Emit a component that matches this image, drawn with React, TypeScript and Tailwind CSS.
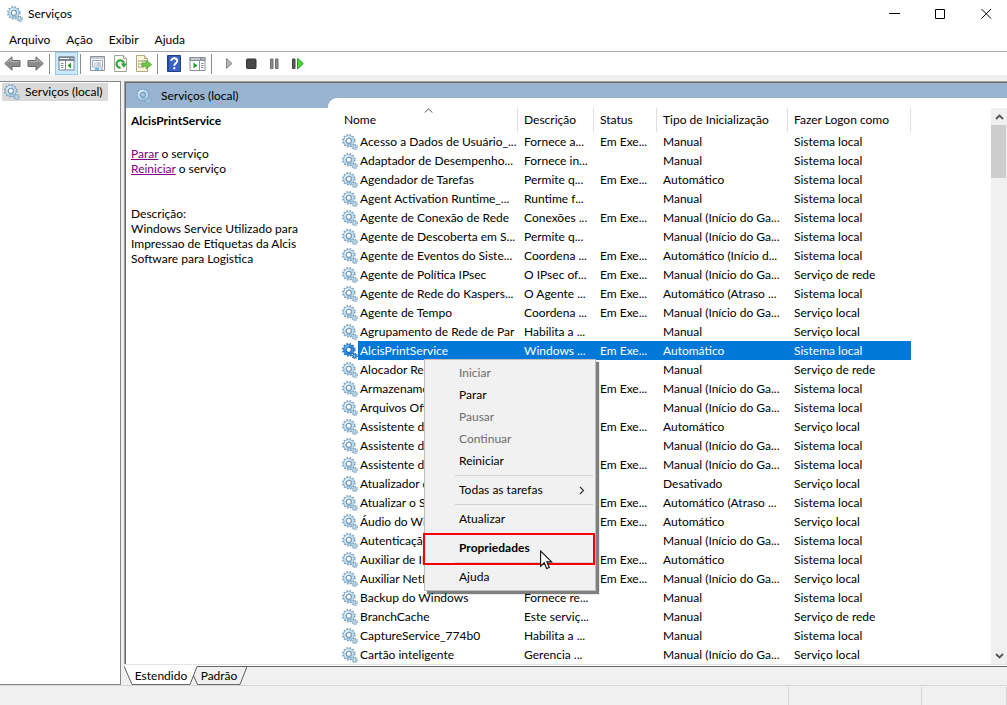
import type { ReactNode } from 'react';

type Service = { name: string; desc: string; running?: boolean; start: string; logon: string };

const MANUAL = 'Manual';
const AUTO = 'Automático';
const MANUAL_TRIGGER = 'Manual (Início do Ga...';
const LOCAL_SYSTEM = 'Sistema local';
const LOCAL_SERVICE = 'Serviço local';
const NETWORK = 'Serviço de rede';

const services: Service[] = [
  { name: 'Acesso a Dados de Usuário_...', desc: 'Fornece a...', running: true, start: MANUAL, logon: LOCAL_SYSTEM },
  { name: 'Adaptador de Desempenho...', desc: 'Fornece in...', start: MANUAL, logon: LOCAL_SYSTEM },
  { name: 'Agendador de Tarefas', desc: 'Permite q...', running: true, start: AUTO, logon: LOCAL_SYSTEM },
  { name: 'Agent Activation Runtime_...', desc: 'Runtime f...', start: MANUAL, logon: LOCAL_SYSTEM },
  { name: 'Agente de Conexão de Rede', desc: 'Conexões ...', running: true, start: MANUAL_TRIGGER, logon: LOCAL_SYSTEM },
  { name: 'Agente de Descoberta em S...', desc: 'Permite q...', start: MANUAL_TRIGGER, logon: LOCAL_SYSTEM },
  { name: 'Agente de Eventos do Siste...', desc: 'Coordena ...', running: true, start: 'Automático (Início d...', logon: LOCAL_SYSTEM },
  { name: 'Agente de Política IPsec', desc: 'O IPsec of...', running: true, start: MANUAL_TRIGGER, logon: NETWORK },
  { name: 'Agente de Rede do Kaspers...', desc: 'O Agente ...', running: true, start: 'Automático (Atraso ...', logon: LOCAL_SYSTEM },
  { name: 'Agente de Tempo', desc: 'Coordena ...', running: true, start: MANUAL_TRIGGER, logon: LOCAL_SERVICE },
  { name: 'Agrupamento de Rede de Par', desc: 'Habilita a ...', start: MANUAL, logon: LOCAL_SERVICE },
  { name: 'AlcisPrintService', desc: 'Windows ...', running: true, start: AUTO, logon: LOCAL_SYSTEM },
  { name: 'Alocador Remoto', desc: '', start: MANUAL, logon: NETWORK },
  { name: 'Armazenamento', desc: '', running: true, start: MANUAL_TRIGGER, logon: LOCAL_SYSTEM },
  { name: 'Arquivos Offline', desc: '', start: MANUAL_TRIGGER, logon: LOCAL_SYSTEM },
  { name: 'Assistente de', desc: '', running: true, start: AUTO, logon: LOCAL_SERVICE },
  { name: 'Assistente de', desc: '', start: MANUAL_TRIGGER, logon: LOCAL_SYSTEM },
  { name: 'Assistente de', desc: '', running: true, start: MANUAL_TRIGGER, logon: LOCAL_SYSTEM },
  { name: 'Atualizador de', desc: '', start: 'Desativado', logon: LOCAL_SERVICE },
  { name: 'Atualizar o Serviço', desc: '', running: true, start: 'Automático (Atraso ...', logon: LOCAL_SYSTEM },
  { name: 'Áudio do Windows', desc: '', running: true, start: AUTO, logon: LOCAL_SERVICE },
  { name: 'Autenticação', desc: '', start: MANUAL_TRIGGER, logon: LOCAL_SYSTEM },
  { name: 'Auxiliar de IP', desc: '', running: true, start: AUTO, logon: LOCAL_SYSTEM },
  { name: 'Auxiliar NetBIOS', desc: '', running: true, start: MANUAL_TRIGGER, logon: LOCAL_SERVICE },
  { name: 'Backup do Windows', desc: 'Fornece re...', start: MANUAL, logon: LOCAL_SYSTEM },
  { name: 'BranchCache', desc: 'Este serviç...', start: MANUAL, logon: NETWORK },
  { name: 'CaptureService_774b0', desc: 'Habilita a ...', start: MANUAL, logon: LOCAL_SYSTEM },
  { name: 'Cartão inteligente', desc: 'Gerencia ...', start: MANUAL_TRIGGER, logon: LOCAL_SERVICE },
];

function Gears({ selected = false, pale = false }: { selected?: boolean; pale?: boolean }) {
  const edge = selected ? '#1a6fc0' : pale ? '#7fa6c6' : '#7d9fb8';
  const body = selected ? '#2f8ce0' : '#bcdcf1';
  const hole = selected ? '#ffffff' : pale ? '#a9c3dc' : '#ffffff';
  return (
    <svg width="16" height="16" viewBox="0 0 16 16" className="shrink-0" aria-hidden="true">
      <circle cx="6.8" cy="6.8" r="6" fill="none" stroke={edge} strokeWidth="1.6" strokeDasharray="1.6 1.541" />
      <circle cx="6.8" cy="6.8" r="4" fill={hole} stroke={edge} strokeWidth="3.2" />
      <circle cx="6.8" cy="6.8" r="4.1" fill="none" stroke={body} strokeWidth="2.2" />
      <path d="M3.1 5.6A3.900 3.900 0 0 1 7 2.900" fill="none" stroke={selected ? '#8cc6f5' : '#e4f3fc'} strokeWidth="1.200" />
      <path d="M9.600 9.700A4.100 4.100 0 0 1 5 10.500" fill="none" stroke={selected ? '#1a6fc0' : '#86b4d6'} strokeWidth="1.200" />
      <circle cx="6.800" cy="6.800" r="2.500" fill="none" stroke={selected ? '#1a6fc0' : '#6a8ca6'} strokeWidth=".800" />
      <circle cx="12.700" cy="13" r="2.600" fill="none" stroke={edge} strokeWidth="1.200" strokeDasharray="1.040 1.002" />
      <circle cx="12.700" cy="13" r="1.500" fill={hole} stroke={edge} strokeWidth="1.600" />
      <circle cx="12.700" cy="13" r="1.600" fill="none" stroke={body} strokeWidth=".900" />
    </svg>
  );
}

function ToolButton({ label, active = false, children }: { label: string; active?: boolean; children: ReactNode }) {
  return (
    <button
      type="button"
      aria-label={label}
      className={
        active
          ? 'flex h-full w-[23px] items-center justify-center border border-[#90c8f6] bg-[#cce8ff]'
          : 'flex h-full w-[23px] items-center justify-center'
      }
    >
      <svg width="17" height="17" viewBox="0 0 17 17" className="shrink-0" aria-hidden="true">
        {children}
      </svg>
    </button>
  );
}

function ToolDivider() {
  return (
    <div className="flex h-5 w-2 pl-[2px]">
      <div className="w-px bg-[#8c8c8c]" />
    </div>
  );
}

function Toolbar() {
  return (
    <div className="flex h-[23px] items-center bg-white pl-px">
      <ToolButton label="Voltar">
        <path d="M.8 8.5 8 1.8v3.7h8v6H8v3.7Z" fill="#8b8b8b" stroke="#6a6a6a" />
        <path d="M2.6 8.3 7 4.2v2.4h7.9" fill="none" stroke="#b9b9b9" />
      </ToolButton>
      <ToolButton label="Avançar">
        <path d="M16.2 8.5 9 1.8v3.7H1v6h8v3.7Z" fill="#8b8b8b" stroke="#6a6a6a" />
        <path d="M14.4 8.3 10 4.2v2.4H2.1" fill="none" stroke="#b9b9b9" />
      </ToolButton>
      <ToolDivider />
      <ToolButton label="Mostrar/ocultar árvore do console" active>
        <path d="M1 2h15v13H1z" fill="#fff" stroke="#7a8793" />
        <path d="M.5 1.500h16v4.500H.5z" fill="#7a8793" />
        <path d="M2 3.500h9M12.500 3.500h1M14.500 3.500h1" stroke="#fff" />
        <path d="M7.500 6v9" stroke="#7a8793" />
        <path d="M3 8.500h2.500M3 10.500h2.500M3 12.500h2.500" stroke="#7d8b9a" />
        <path d="M13 7.500v6L9.500 10.500Z" fill="#1f9d2b" />
      </ToolButton>
      <ToolDivider />
      <ToolButton label="Propriedades">
        <path d="M1.500 1.500h14v14h-14z" fill="#f4f6f7" stroke="#8a929a" />
        <path d="M2 3h13" stroke="#c3ccd3" strokeWidth="2" />
        <path d="M3.500 5.500h10v6.500h-10z" fill="#fff" stroke="#9aa8b8" />
        <path d="M5 8h1.500M7.500 8H12M5 10h1.500M7.500 10H12" stroke="#8a9bb2" />
        <path d="M6 14h4" stroke="#28b6e8" strokeWidth="1.600" />
        <path d="M11.500 14H14" stroke="#9fb0bd" strokeWidth="1.400" />
      </ToolButton>
      <ToolButton label="Atualizar">
        <path d="M2.500.5h9l3 3v13h-12z" fill="#fbfbf6" stroke="#a3a398" />
        <path d="M11.500.5v3h3" fill="#e6e6dc" stroke="#a3a398" />
        <path d="M8.600 12.700a3.700 3.700 0 1 1 3.300-4" fill="none" stroke="#2aa636" strokeWidth="2.100" />
        <path d="M8.800 8.600h6l-2.800 4.200Z" fill="#2aa636" />
      </ToolButton>
      <ToolButton label="Exportar lista">
        <path d="M1.500.5h8l3 3v13h-11z" fill="#fdf8dc" stroke="#b3aa83" />
        <path d="M9.500.5v3h3" fill="#efe8c2" stroke="#b3aa83" />
        <path d="M3.200 6h1.200M3.200 9h1.200M3.200 12h1.200" stroke="#444" strokeWidth="1.200" />
        <path d="M5.500 6H11M5.500 9H9M5.500 12H9" stroke="#85815f" />
        <path d="M7 8h4.200V5.200L16.600 9.600l-5.400 4.300V11.200H7Z" fill="#6ccb42" stroke="#4aa72c" strokeWidth=".8" />
      </ToolButton>
      <ToolDivider />
      <ToolButton label="Ajuda">
        <path d="M1.500.5h13v16h-13z" fill="#3a62c4" stroke="#23408f" />
        <path d="M2.500 1v15" stroke="#2a4aa2" />
        <path d="M5.300 5.900c0-3.600 5.900-3.400 5.900 0 0 2.300-2.900 2.300-2.900 4.800" fill="none" stroke="#fff" strokeWidth="1.900" />
        <path d="M7.300 12.200h2v2h-2z" fill="#fff" />
      </ToolButton>
      <ToolButton label="Mostrar/ocultar painel de ações">
        <path d="M1 2.500h15v13H1z" fill="#fff" stroke="#8a929a" />
        <path d="M.5 2h16v4H.5z" fill="#8a929a" />
        <path d="M2 4h9M12.500 4h1M14.500 4h1" stroke="#fff" />
        <path d="M10.500 6v9" stroke="#8a929a" />
        <path d="M12 8.500h2.500M12 10.500h2.500M12 12.500h2.500" stroke="#7d8b9a" />
        <path d="M4.500 7.500v6L8.500 10.500Z" fill="#1f9d2b" />
      </ToolButton>
      <ToolDivider />
      <ToolButton label="Iniciar serviço">
        <path d="M6.500 3.500v10l5.500-5Z" fill="#b4b4b4" stroke="#8a8a8a" />
      </ToolButton>
      <ToolButton label="Parar serviço">
        <rect x="3.500" y="4" width="9.500" height="9.500" rx="1" fill="#484848" stroke="#333" />
      </ToolButton>
      <ToolButton label="Pausar serviço">
        <path d="M4.500 4H7v9.500H4.500zM9.500 4H12v9.500H9.500z" fill="#8e8e8e" stroke="#6c6c6c" />
      </ToolButton>
      <ToolButton label="Reiniciar serviço">
        <path d="M3.500 4H6v9.500H3.500z" fill="#5c5c5c" stroke="#444" />
        <path d="M8.500 3.300v10.600l5.800-5.300Z" fill="#4fd43c" stroke="#1f9e1b" />
      </ToolButton>
    </div>
  );
}

function MenuItem({ disabled = false, children }: { disabled?: boolean; children: ReactNode }) {
  return (
    <button
      type="button"
      role="menuitem"
      disabled={disabled}
      className="flex h-[22px] w-full items-center justify-between pr-2 pl-8 text-left disabled:text-[#6d6d6d]"
    >
      {children}
    </button>
  );
}

function MenuDivider() {
  return (
    <div role="separator" className="flex h-[7px] items-center pl-7">
      <div className="h-px flex-1 bg-[#d0d0d0]" />
    </div>
  );
}

function ContextMenu() {
  return (
    <div
      role="menu"
      className="absolute top-[251px] left-[82px] w-[172px] border border-[#bfbfbf] bg-[#f1f1f1] p-[2px] shadow-[3px_3px_1px_rgba(0,0,0,0.5)]"
    >
      <MenuItem disabled>Iniciar</MenuItem>
      <MenuItem>Parar</MenuItem>
      <MenuItem disabled>Pausar</MenuItem>
      <MenuItem disabled>Continuar</MenuItem>
      <MenuItem>Reiniciar</MenuItem>
      <MenuDivider />
      <MenuItem>
        Todas as tarefas
        <svg width="6" height="9" viewBox="0 0 6 9" aria-hidden="true">
          <path d="M1 1l3.500 3.500L1 8" fill="none" stroke="#333" strokeWidth="1.200" />
        </svg>
      </MenuItem>
      <MenuDivider />
      <MenuItem>Atualizar</MenuItem>
      <MenuDivider />
      <div className="relative">
        <MenuItem>
          <span className="font-bold">Propriedades</span>
        </MenuItem>
        <div className="pointer-events-none absolute -top-1 -right-[2px] -bottom-[6px] -left-1 z-10 border-2 border-[#f60000]" />
        <svg width="13" height="20" viewBox="0 0 13 20" className="absolute top-[13px] left-[113px] z-20" aria-hidden="true">
          <path d="M.600 1v15.200l3.600-3.400 2.500 5.700 2.600-1.100-2.500-5.500h4.900Z" fill="#fff" stroke="#111" strokeWidth="1.100" />
        </svg>
      </div>
      <MenuDivider />
      <MenuItem>Ajuda</MenuItem>
    </div>
  );
}

function ServiceTable() {
  return (
    <table className="w-[569px] table-fixed border-separate border-spacing-0 text-left">
      <colgroup>
        <col className="w-[176px]" />
        <col className="w-[76px]" />
        <col className="w-[63px]" />
        <col className="w-[131px]" />
        <col className="w-[123px]" />
      </colgroup>
      <thead>
        <tr className="h-6">
          <th scope="col" className="relative border-r border-[#e0e0e0] p-0 pl-[2px] font-normal">
            Nome
            <svg width="9" height="5" viewBox="0 0 9 5" className="absolute top-0 left-[82px]" aria-hidden="true">
              <path d="M.800 4.500l3.700-3.700 3.700 3.700" fill="none" stroke="#555" />
            </svg>
          </th>
          <th scope="col" className="border-r border-[#e0e0e0] p-0 pl-[6px] font-normal">Descrição</th>
          <th scope="col" className="border-r border-[#e0e0e0] p-0 pl-[6px] font-normal">Status</th>
          <th scope="col" className="border-r border-[#e0e0e0] p-0 pl-[6px] font-normal">Tipo de Inicialização</th>
          <th scope="col" className="border-r border-[#e0e0e0] p-0 pl-[6px] font-normal">Fazer Logon como</th>
        </tr>
      </thead>
      <tbody className="leading-[19px] whitespace-nowrap">
        {services.map((s, i) => {
          const selected = s.name === 'AlcisPrintService';
          const cell = selected ? 'bg-[#0078d7] p-0 pl-[6px] text-white' : 'p-0 pl-[6px]';
          return (
            <tr key={i} className="h-[19px]" aria-selected={selected}>
              <td className="p-0">
                <div className="flex h-[19px] items-center">
                  <Gears selected={selected} />
                  <span className={selected ? 'flex-1 bg-[#0078d7] pl-[2px] text-white' : 'flex-1 pl-[2px]'}>{s.name}</span>
                </div>
              </td>
              <td className={cell}>{s.desc}</td>
              <td className={cell}>{s.running ? 'Em Exe...' : ''}</td>
              <td className={cell}>{s.start}</td>
              <td className={cell}>{s.logon}</td>
            </tr>
          );
        })}
      </tbody>
    </table>
  );
}

function ScrollBar() {
  return (
    <div className="mt-[10px] flex w-4 shrink-0 flex-col bg-[#f0f0f0]">
      <button type="button" aria-label="Rolar para cima" className="flex h-[17px] items-center justify-center">
        <svg width="9" height="6" viewBox="0 0 9 6" aria-hidden="true">
          <path d="M1 5l3.500-3.500L8 5" fill="none" stroke="#555" strokeWidth="1.800" />
        </svg>
      </button>
      <div className="h-[53px] w-[15px] bg-[#cdcdcd]" />
      <div className="flex-1" />
      <button type="button" aria-label="Rolar para baixo" className="flex h-[17px] items-center justify-center">
        <svg width="9" height="6" viewBox="0 0 9 6" aria-hidden="true">
          <path d="M1 1l3.500 3.500L8 1" fill="none" stroke="#555" strokeWidth="1.800" />
        </svg>
      </button>
    </div>
  );
}

function ViewTabs() {
  return (
    <div role="tablist" className="flex h-[19px] leading-[18px]">
      <svg width="9" height="19" viewBox="0 0 9 19" className="shrink-0" aria-hidden="true">
        <path d="M0 0h9v18.500H8Z" fill="#fff" />
        <path d="M0 0l8 18.500h1" fill="none" stroke="#5f5f5f" />
      </svg>
      <button type="button" role="tab" aria-selected="true" className="w-14 border-b border-[#696969] bg-white pt-px text-center">
        Estendido
      </button>
      <svg width="10" height="19" viewBox="0 0 10 19" className="shrink-0" aria-hidden="true">
        <path d="M0 0h8L1 18.500H0Z" fill="#fff" />
        <path d="M0 18.500h1L8 .500h2M4.500 9.500l4 9H10" fill="none" stroke="#5f5f5f" />
      </svg>
      <button type="button" role="tab" aria-selected="false" className="w-10 border-t border-b border-[#696969] text-center leading-[17px]">
        Padrão
      </button>
      <svg width="8" height="19" viewBox="0 0 8 19" className="shrink-0" aria-hidden="true">
        <path d="M0 .500h8M0 18.500h1L8 .500" fill="none" stroke="#5f5f5f" />
      </svg>
      <div className="flex-1 border-t border-[#696969]" />
    </div>
  );
}

export default function App() {
  return (
    <div className="flex min-h-screen flex-col bg-[#f0f0f0] font-['Lato','Noto_Sans',sans-serif] text-[12px] text-black">
      <header className="bg-white">
        <div className="flex h-7 items-center justify-between pl-[7px]">
          <h1 className="flex items-center gap-[5px]">
            <Gears />
            Serviços
          </h1>
          <div className="flex gap-1">
            <button type="button" aria-label="Minimizar" className="flex h-7 w-[42px] items-center justify-center">
              <svg width="11" height="11" viewBox="0 0 11 11" aria-hidden="true">
                <path d="M0 4.500h11" stroke="#000" />
              </svg>
            </button>
            <button type="button" aria-label="Maximizar" className="flex h-7 w-[42px] items-center justify-center">
              <svg width="11" height="11" viewBox="0 0 11 11" aria-hidden="true">
                <path d="M.500 .500h9v9H.500z" fill="none" stroke="#000" />
              </svg>
            </button>
            <button type="button" aria-label="Fechar" className="flex h-7 w-[42px] items-center justify-center">
              <svg width="11" height="11" viewBox="0 0 11 11" aria-hidden="true">
                <path d="M.500 0l9.500 9.500M10 0L.500 9.500" fill="none" stroke="#000" />
              </svg>
            </button>
          </div>
        </div>
        <nav className="flex h-6 items-center gap-4 border-b border-[#a8a8a8] pl-[9px]">
          <button type="button">Arquivo</button>
          <button type="button">Ação</button>
          <button type="button">Exibir</button>
          <button type="button">Ajuda</button>
        </nav>
        <Toolbar />
      </header>

      <main className="mt-[6px] flex flex-1 gap-[3px]">
        <aside className="w-[121px] shrink-0 border-t border-r border-b border-[#828790] bg-white pt-px pl-[2px]">
          <div className="flex h-[18px] w-[106px] items-center gap-[5px] bg-[#d9d9d9] pl-[2px]">
            <Gears />
            Serviços (local)
          </div>
        </aside>

        <div className="flex min-w-0 flex-1 flex-col">
          <div className="flex flex-1 border-t border-l border-[#a0a0a0]">
            <div className="flex min-w-0 flex-1 border-t border-l border-[#696969] bg-[#99b4d1]">
              <section className="flex w-[202px] shrink-0 flex-col">
                <div className="flex h-[25px] items-center gap-[9px] pl-[10px]">
                  <Gears pale />
                  Serviços (local)
                </div>
                <div className="flex-1 bg-white pt-[5px] pr-6 pl-[5px] leading-[15px]">
                  <h2 className="font-bold">AlcisPrintService</h2>
                  <p className="mt-[18px]">
                    <a href="#parar" className="text-[#800080] underline">Parar</a> o serviço
                  </p>
                  <p>
                    <a href="#reiniciar" className="text-[#800080] underline">Reiniciar</a> o serviço
                  </p>
                  <p className="mt-[30px]">Descrição:</p>
                  <p>Windows Service Utilizado para Impressao de Etiquetas da Alcis Software para Logistica</p>
                </div>
              </section>
              <section className="mt-[15px] flex min-w-0 flex-1 rounded-tl-[9px] bg-white">
                <div className="relative mt-[10px] ml-[14px] min-w-0 flex-1">
                  <ServiceTable />
                  <ContextMenu />
                </div>
                <ScrollBar />
              </section>
            </div>
          </div>
          <div className="h-[2px] border-t border-[#e3e3e3] bg-white" />
          <ViewTabs />
        </div>
      </main>

      <footer className="flex h-5 border-t border-[#d7d7d7] pt-px">
        <div className="flex-1 border-r border-[#d7d7d7]" />
        <div className="w-[133px] border-r border-[#d7d7d7]" />
        <div className="w-[85px] border-r border-[#d7d7d7]" />
      </footer>
    </div>
  );
}
